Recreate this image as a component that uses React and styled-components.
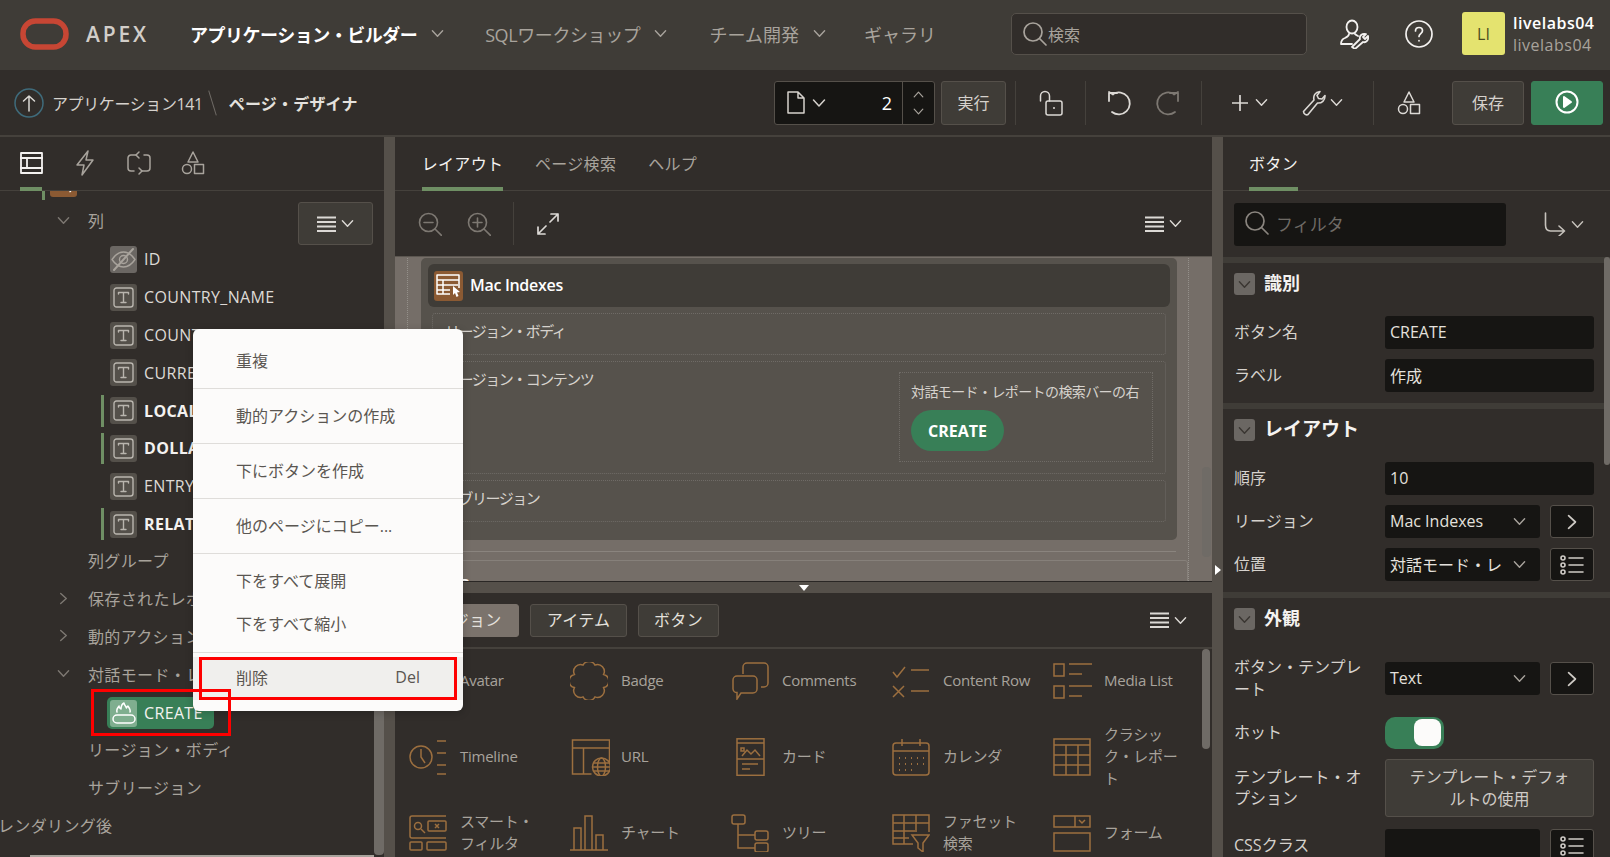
import React from "react";
import styled, { createGlobalStyle } from "styled-components";

const Global = createGlobalStyle`
  html, body { margin: 0; padding: 0; height: 100%; overflow: hidden; background: #312d2a; }
  body { font-family: "Open Sans", "Noto Sans CJK JP", sans-serif; font-size: 16px; color: #d6d2cd; }
  * { box-sizing: border-box; }
`;

const C = {
  bar: "#3f3c37", bg: "#312d2a", split: "#55504a", line: "#45413c", input: "#161513",
  muted: "#a8a39c", text: "#dedad6", white: "#fcfbfa", green: "#387f57", brown: "#9c6f3f", tab: "#6f8f64",
};

const Ic = styled.svg`
  flex: none; display: block; fill: none; stroke: currentColor; stroke-width: ${(p) => p.$sw || 1.5};
  color: ${(p) => p.$c || "inherit"}; stroke-linecap: round; stroke-linejoin: round;
`;

const Chev = ({ c, w = 13, dir = "down", sw = 1.5 }) => (
  <Ic $c={c} $sw={sw} width={w} height={w} viewBox="0 0 14 14">
    {dir === "down" && <path d="M1.5 4l5.5 6 5.5-6" />}
    {dir === "up" && <path d="M1.5 10l5.5-6 5.5 6" />}
    {dir === "right" && <path d="M4 1.5l6 5.5-6 5.5" />}
  </Ic>
);
const SearchI = ({ c, s = 26 }) => (
  <Ic $c={c} $sw={1.7} width={s} height={s} viewBox="0 0 26 26"><circle cx="11" cy="11" r="9" /><path d="M17.5 17.5L24 24" /></Ic>
);
const UserWrench = () => (
  <Ic $c="#f4f2f0" $sw={1.8} width={30} height={30} viewBox="0 0 30 30">
    <ellipse cx="13" cy="8" rx="5.5" ry="6.5" />
    <path d="M10 15c0 2-2 3-4 4-2.500 1-4 3-4 6h11" />
    <path d="M16 15c1 1 2 1.500 3 2" />
    <path d="M13 28l8-8c-1-3 2-6 6-5l-3 3 2 2 3-3c1 4-2 7-5 6l-8 7z" />
  </Ic>
);
const HelpI = () => (
  <Ic $c="#f4f2f0" $sw={1.7} width={28} height={28} viewBox="0 0 28 28">
    <circle cx="14" cy="14" r="13" /><path d="M10.500 11c0-2 1.500-3.500 3.500-3.500s3.500 1.500 3.500 3.300c0 2.700-3.500 3-3.500 5.700" /><path d="M14 20.500v.3" />
  </Ic>
);
const UpCircle = () => (
  <Ic $c="#dcd9d5" width={30} height={30} viewBox="0 0 30 30">
    <circle cx="15" cy="15" r="14" stroke="#3f6b7b" /><path d="M15 23V8M9.500 13L15 8l5.500 5" />
  </Ic>
);
const FileI = () => (
  <Ic $c="#d6d2cd" width={18} height={23} viewBox="0 0 18 23"><path d="M1 1h10l6 6v15H1zM11 1v6h6" /></Ic>
);
const LockI = () => (
  <Ic $c="#dcd9d5" width={24} height={26} viewBox="0 0 24 26">
    <rect x="7" y="11" width="16" height="14" rx="2" /><path d="M1.500 11V6a4.500 4.500 0 019 0v5" /><path d="M15 18v.1" strokeWidth="2" />
  </Ic>
);
const UndoI = ({ c, flip }) => (
  <Ic $c={c} $sw={1.8} width={24} height={26} viewBox="0 0 24 26" style={flip ? { transform: "scaleX(-1)" } : undefined}>
    <path d="M6 4a11 11 0 11-1 18" /><path d="M2 2l4 2.500v-.5M2 11V3h8" />
  </Ic>
);
const PlusI = () => (
  <Ic $c="#dcd9d5" $sw={1.7} width={16} height={16} viewBox="0 0 16 16"><path d="M8 0.500v15M0.500 8h15" /></Ic>
);
const WrenchI = () => (
  <Ic $c="#dcd9d5" $sw={1.6} width={24} height={26} viewBox="0 0 24 26">
    <path d="M1.500 21.500L12 10c-1-4 1-8 6-8.500l-3 4 1.500 3 3.500.500 3-3.500c.3 5-3.500 8-7.500 7.500L6 24.500c-1.500 1-4.500-.5-4.500-3z" />
  </Ic>
);
const ShapesI = ({ c = "#dcd9d5", s = 24 }) => (
  <Ic $c={c} $sw={1.5} width={s} height={s} viewBox="0 0 24 24">
    <path d="M12 1l5 10H7z" /><circle cx="6" cy="18" r="4.500" /><rect x="13.500" y="13.500" width="9" height="9" />
  </Ic>
);
const PlayCircle = () => (
  <Ic $c="#fff" $sw={2} width={24} height={24} viewBox="0 0 24 24"><circle cx="12" cy="12" r="10.500" /><path d="M9 7l7 5-7 5z" fill="#fff" /></Ic>
);
const LayoutI = () => (
  <Ic $c="#f4f2f0" $sw={1.8} width={23} height={24} viewBox="0 0 23 24" style={{ strokeLinecap: "square" }}><rect x="1" y="2" width="21" height="20" /><path d="M1 7h21M1 17h21M7 7v10" /></Ic>
);
const BoltI = () => (
  <Ic $c="#a8a39c" width={20} height={26} viewBox="0 0 20 26"><path d="M13 1L2 15h7l-2 10 11-15h-7z" /></Ic>
);
const LoopI = () => (
  <Ic $c="#a8a39c" width={24} height={26} viewBox="0 0 24 26">
    <path d="M9 5H4a3 3 0 00-3 3v10a3 3 0 003 3h3M15 21h5a3 3 0 003-3V8a3 3 0 00-3-3h-3" />
    <path d="M12 2l-3 3 3 3M12 18l3 3-3 3" />
  </Ic>
);
const MenuI = ({ c = "#dcd9d5" }) => (
  <Ic $c={c} $sw={1.9} width={19} height={16} viewBox="0 0 19 16" style={{ strokeLinecap: "butt" }}><path d="M0 1.500h19M0 6h19M0 10.500h19M0 15h19" /></Ic>
);
const ZoomI = ({ plus }) => (
  <Ic $c="#7d7872" $sw={1.6} width={24} height={24} viewBox="0 0 24 24">
    <circle cx="10.500" cy="10.500" r="9" /><path d="M17 17l6.500 6.500M6 10.500h9" />{plus && <path d="M10.500 6v9" />}
  </Ic>
);
const ExpandI = () => (
  <Ic $c="#dcd9d5" $sw={1.7} width={22} height={22} viewBox="0 0 22 22"><path d="M13 9L21 1M14 1h7v7M9 13l-8 8M1 14v7h7" /></Ic>
);
const TurnI = () => (
  <Ic $c="#c6c2bc" $sw={1.6} width={22} height={24} viewBox="0 0 22 24"><path d="M1.500 1v12c0 4 2 6 5 6h14M15 14l5.500 5-5.500 5" /></Ic>
);
const ListI = () => (
  <Ic $c="#cfcbc6" $sw={1.6} width={24} height={20} viewBox="0 0 24 20">
    <circle cx="3" cy="3" r="2" /><circle cx="3" cy="10" r="2" /><circle cx="3" cy="17" r="2" /><path d="M9 3h14M9 10h14M9 17h14" />
  </Ic>
);
const TIcon = () => (
  <Ic $c="#b9b5ae" $sw={1.4} width={21} height={21} viewBox="0 0 21 21">
    <rect x="1" y="1" width="19" height="19" rx="2.500" /><path d="M5.500 7V5.500h10V7M10.500 5.500v10M8 15.500h5" />
  </Ic>
);
const EyeOff = () => (
  <Ic $c="#a8a39c" $sw={1.4} width={25} height={25} viewBox="0 0 25 25">
    <path d="M1 12.500C5 6.500 9 5 12.500 5s7.500 1.500 11.500 7.500C20 18.500 16 20 12.500 20S5 18.500 1 12.500z" />
    <circle cx="12.500" cy="12.500" r="4" /><path d="M3 23L22 2" strokeWidth="2" />
  </Ic>
);
const FireI = () => (
  <Ic $c="#fff" $sw={1.5} width={24} height={22} viewBox="0 0 24 22">
    <rect x="1" y="13" width="22" height="8" rx="4" />
    <path d="M5 10c-1-3 1-4 2-6 0 2 1 2 2 3 0-3 1-5 3-6 0 2 2 3 2.500 5 .5-1 1-2 1.500-2 1 2 3 4 2 6" />
  </Ic>
);
const ReportI = ({ s = 26, c = "#fff" }) => (
  <Ic $c={c} $sw={1.5} width={s} height={s} viewBox="0 0 26 26" style={{ strokeLinecap: "butt" }}>
    <path d="M14 21H1V2h22v13" /><path d="M1 7h22M1 12h21M1 17h13M7 7v14" /><path d="M17 13l7 6-3 .5 1.500 3.500-2 1-1.500-4-2 2z" fill={c} stroke="none" />
  </Ic>
);

/* palette icons */
const PalSvg = ({ children, w = 38 }) => (
  <Ic $c={C.brown} $sw={1.5} width={w} height={38} viewBox="0 0 38 38" style={{ strokeLinecap: "butt", strokeLinejoin: "miter" }}>{children}</Ic>
);
const lobes = (() => {
  const n = 8, cx = 19, cy = 19, r = 15;
  const pts = Array.from({ length: n }, (_, i) => {
    const a = (i / n) * Math.PI * 2 - Math.PI / 2 + Math.PI / 8;
    return [cx + r * Math.cos(a) * 1.05, cy + r * Math.sin(a) * 1.15];
  });
  return pts.map((p, i) => (i === 0 ? `M${p[0].toFixed(1)} ${p[1].toFixed(1)}` : `A6.800 6.800 0 0 1 ${p[0].toFixed(1)} ${p[1].toFixed(1)}`)).join(" ") + ` A6.800 6.800 0 0 1 ${pts[0][0].toFixed(1)} ${pts[0][1].toFixed(1)}Z`;
})();
const icons = {
  avatar: <PalSvg><circle cx="19" cy="19" r="17" /></PalSvg>,
  badge: <PalSvg><path d={lobes} /></PalSvg>,
  comments: (
    <PalSvg w={40}>
      <path d="M12 12V5a4 4 0 014-4h17a4 4 0 014 4v16a4 4 0 01-4 4h-3" />
      <path d="M6 14h16a4 4 0 014 4v9a4 4 0 01-4 4H10l-4 6v-6.500A4 4 0 012 27v-9a4 4 0 014-4z" />
    </PalSvg>
  ),
  contentRow: (
    <PalSvg>
      <path d="M1 10l4 5 8-10M19 8h18M1 24l11 11M12 24L1 35M19 29h18" />
    </PalSvg>
  ),
  mediaList: (
    <PalSvg w={40}>
      <rect x="1" y="2" width="10" height="12" /><rect x="1" y="24" width="10" height="12" />
      <path d="M16 2h23M16 12h13M16 24h23M16 34h13" />
    </PalSvg>
  ),
  timeline: (
    <PalSvg>
      <circle cx="12" cy="19" r="11" /><path d="M12 11v8l4 6M28 3h9M28 15h9M28 27h9M28 36h9" />
    </PalSvg>
  ),
  url: (
    <PalSvg w={41}>
      <path d="M21 36H2V2h37v22M2 10h37M13 10v26" />
      <circle cx="31" cy="29" r="9" /><ellipse cx="31" cy="29" rx="4" ry="9" /><path d="M22 29h18M23 25h16M23 33h16" />
    </PalSvg>
  ),
  card: (
    <PalSvg>
      <rect x="6" y="0.800" width="27" height="36.500" /><path d="M6 5h27M6 21h27M11 18l5-6 4 4 4-4 5 6M10 13h3v-3h-3zM11 26h16M11 31h8" />
    </PalSvg>
  ),
  calendar: (
    <PalSvg>
      <rect x="1" y="5" width="36" height="32" rx="3" /><path d="M1 13h36M10 1v7M28 1v7" />
      <path d="M7 20h1M13 20h1M19 20h1M25 20h1M31 20h1M7 26h1M13 26h1M19 26h1M25 26h1M31 26h1M7 32h1M13 32h1M19 32h1" strokeWidth="2" />
    </PalSvg>
  ),
  classic: (
    <PalSvg><rect x="1" y="1" width="36" height="36" /><path d="M1 7h36M1 17h36M1 27h36M13 7v30M25 7v30" /></PalSvg>
  ),
  smart: (
    <PalSvg>
      <path d="M37 2H3a2 2 0 00-2 2v18a2 2 0 002 2h34" /><circle cx="9" cy="12" r="3.500" /><path d="M12 15l4 4" />
      <rect x="19" y="7" width="18" height="10" rx="1" /><path d="M26 10l4 4M30 10l-4 4" />
      <rect x="1" y="28" width="12" height="8" rx="1" /><rect x="18" y="28" width="19" height="8" rx="1" />
    </PalSvg>
  ),
  chart: (
    <PalSvg><path d="M0 36h38M4 36V14h7v22M15 36V2h7v34M26 36V21h7v15" /></PalSvg>
  ),
  tree: (
    <PalSvg>
      <rect x="1" y="1" width="13" height="9" rx="2" /><rect x="24" y="17" width="13" height="9" rx="2" /><rect x="24" y="29" width="13" height="9" rx="2" />
      <path d="M7 10v24h17M7 21h17" />
    </PalSvg>
  ),
  facet: (
    <PalSvg>
      <path d="M21 30H1V1h36v17M1 9h36M1 17h22M1 24h16M12 1v29M24 1v17" />
      <path d="M20 21h17l-6 8v9l-5-4v-5z" />
    </PalSvg>
  ),
  form: (
    <PalSvg>
      <rect x="1" y="2" width="36" height="11" /><path d="M22 2v11M26 6l3 3 3-3" /><rect x="1" y="19" width="36" height="18" />
    </PalSvg>
  ),
};

/* ---------- layout ---------- */
const Page = styled.div`
  position: relative; width: 1610px; height: 857px; overflow: hidden;
  display: flex; flex-direction: column; background: ${C.bg};
`;
const Header = styled.header`
  height: 70px; flex: none; display: flex; align-items: center; background: ${C.bar}; padding: 0 13px 3px 20px;
`;
const Logo = styled.svg`flex: none; width: 49px; height: 32px; margin-top: 1px;`;
const Brand = styled.div`
  margin-left: 17px; width: 62px; font-size: 21px; font-weight: 600; letter-spacing: 2.800px; color: #d2cec9; font-family: "Open Sans", sans-serif;
`;
const Nav = styled.nav`display: flex; align-items: center; margin-left: 42px;`;
const NavItem = styled.div`
  display: flex; align-items: center; gap: 14px; white-space: nowrap; font-size: 18px;
  margin-right: ${(p) => p.$mr || 0}px; letter-spacing: ${(p) => p.$ls || 0}px;
  font-weight: ${(p) => (p.$active ? 700 : 400)}; color: ${(p) => (p.$active ? "#fff" : "#a8a39c")};
`;
const SearchBox = styled.div`
  margin-left: auto; width: 296px; height: 42px; display: flex; align-items: center; gap: 0; padding-left: 10px;
  background: ${C.bg}; border: 1px solid #55504a; border-radius: 5px; color: #a8a39c; font-size: 16px;
`;
const UserIconSlot = styled.div`margin-left: 32px;`;
const HelpSlot = styled.div`margin-left: 36px;`;
const Avatar = styled.div`
  margin-left: 29px; width: 43px; height: 43px; border-radius: 3px; background: #e4e36f; color: #4c4b1e;
  display: flex; align-items: center; justify-content: center; font-size: 16px;
`;
const UserNames = styled.div`margin-left: 8px; width: 84px; display: flex; flex-direction: column; line-height: 22px;`;
const UserName = styled.div`
  font-weight: ${(p) => (p.$bold ? 600 : 400)}; color: ${(p) => (p.$bold ? "#fff" : "#a8a39c")}; font-size: 16px; letter-spacing: 0.500px;
`;

const Toolbar = styled.div`
  height: 67px; flex: none; display: flex; align-items: center; padding: 0 7px 0 14px; border-bottom: 2px solid ${C.line}; background: ${C.bg};
`;
const Crumb = styled.div`
  margin-left: ${(p) => p.$ml || 0}px; white-space: nowrap; font-size: 16px; letter-spacing: ${(p) => p.$ls || 0}px;
  font-weight: ${(p) => (p.$bold ? 700 : 400)}; color: ${(p) => (p.$bold ? "#e4e1dd" : "#d6d2cd")};
`;
const CrumbSlash = styled.div`
  margin-left: 9px; width: 1px; height: 26px; background: #6f6b66; transform: rotate(-17deg);
`;
const PageSelect = styled.div`
  margin-left: auto; width: 161px; height: 44px; display: flex; align-items: center; gap: 7px; background: ${C.input};
  border: 1px solid #55504a; border-radius: 3px; padding-left: 12px; color: #d6d2cd;
`;
const PageNum = styled.div`margin-left: auto; font-size: 18px; color: #fff; padding-right: 3px;`;
const Spin = styled.div`
  width: 32px; height: 100%; border-left: 1px solid #55504a; display: flex; flex-direction: column; align-items: center; justify-content: center; gap: 6px;
`;
const ToolBtn = styled.div`
  margin-left: ${(p) => p.$ml || 0}px; width: ${(p) => p.$w}px; height: 44px; display: flex; align-items: center; justify-content: center; padding-bottom: 1px;
  background: ${(p) => (p.$primary ? C.green : C.bar)}; border: 1px solid ${(p) => (p.$primary ? C.green : "#55504a")}; border-radius: 3px;
  font-size: 16px; color: #d6d2cd;
`;
const ToolGroup = styled.div`
  width: ${(p) => p.$w}px; height: 44px; display: flex; align-items: center; justify-content: center; gap: ${(p) => p.$gap || 0}px;
  border-left: 1px solid ${C.line}; margin-left: ${(p) => p.$ml || 0}px;
`;
const WithChev = styled.div`display: flex; align-items: center; gap: ${(p) => p.$gap || 7}px;`;
const SaveSlot = styled.div`margin-left: 9px;`;

const Main = styled.div`flex: 1; min-height: 0; display: grid; grid-template-columns: 384px 11px 817px 11px 387px;`;
const Column = styled.div`position: relative; min-width: 0; display: flex; flex-direction: column; overflow: hidden;`;
const Splitter = styled.div`
  background: ${C.split}; display: flex; align-items: center; justify-content: center; padding-top: ${(p) => p.$pt || 0}px;
`;
const Caret = styled.div`
  width: 0; height: 0; border-top: 5px solid transparent; border-bottom: 5px solid transparent; border-left: 6px solid #fff;
`;
const TabBar = styled.div`
  height: 54px; flex: none; display: flex; align-items: stretch; gap: ${(p) => p.$gap || 32}px; padding-left: ${(p) => p.$pl || 27}px;
  border-bottom: 1px solid ${C.line};
`;
const TabItem = styled.div`
  width: ${(p) => (p.$w ? `${p.$w}px` : "auto")}; display: flex; align-items: center; justify-content: center; height: 54px; white-space: nowrap; font-size: 16px;
  padding-top: 2px; letter-spacing: 0.300px;
  color: ${(p) => (p.$active ? "#f4f2f0" : "#a8a39c")}; border-bottom: 4px solid ${(p) => (p.$active ? C.tab : "transparent")};
`;

const Tree = styled.div`position: relative; flex: 1; overflow: hidden; min-height: 0;`;
const TreeRow = styled.div`
  position: relative; height: 37.800px; display: flex; align-items: center; white-space: nowrap; font-size: 16px; letter-spacing: 0.350px;
  padding-left: ${(p) => p.$pl}px; padding-bottom: ${(p) => (p.$up ? 3 : 0)}px; margin-top: ${(p) => p.$mt || 0}px; margin-left: ${(p) => p.$ml || 0}px;
  color: ${(p) => p.$c || C.muted}; font-weight: ${(p) => (p.$bold ? 700 : 400)};
  &::before {
    content: ""; display: ${(p) => (p.$mod ? "block" : "none")}; position: absolute; left: ${(p) => p.$barL || 101}px;
    top: 3px; bottom: 3px; width: 3px; background: ${C.tab};
  }
`;
const TwistySlot = styled.div`width: 33px; flex: none; display: flex; align-items: center; color: #7d7872; padding-left: 2px;`;
const NodeIcon = styled.div`
  width: 27px; height: 27px; flex: none; margin-right: 7px; border-radius: 3px; display: flex; align-items: center; justify-content: center;
  background: ${(p) => p.$bg || "#54504a"};
`;
const GreenPill = styled.div`
  display: flex; align-items: center; height: 32px; padding: 0 11px 0 3px; background: ${C.green}; border-radius: 5px; color: #f4f2f0;
`;
const TreeMenu = styled.div`
  position: absolute; left: 298px; top: 11px; width: 75px; height: 43px; display: flex; align-items: center; justify-content: center; gap: 5px;
  background: ${C.bar}; border: 1px solid #55504a; border-radius: 3px;
`;
const VScroll = styled.div`
  position: absolute; right: ${(p) => p.$r || 0}px; top: ${(p) => p.$t}px; height: ${(p) => p.$h}px; width: ${(p) => p.$w || 10}px;
  background: #6f6b66; border-radius: 4px;
`;
const HScroll = styled.div`
  position: absolute; left: 30px; right: 10px; bottom: 0; height: 2px; background: #a8a39c;
`;

const CenterTools = styled.div`
  height: 65px; flex: none; display: flex; align-items: center; padding: 0 30px 0 23px;
`;
const ZoomGap = styled.div`width: ${(p) => p.$w}px; flex: none;`;
const VSep = styled.div`width: 1px; height: 43px; background: ${C.line}; flex: none; margin: 0 23px 0 22px;`;
const RightGroup = styled.div`margin-left: auto; display: flex; align-items: center; gap: 5px;`;

const Canvas = styled.div`
  position: relative; height: 325px; flex: none; overflow: hidden; padding: 1px 0 0 12px; background: #756e68; border-top: 1px solid #5b5650;
`;
const Lane = styled.div`
  width: 782px; border-left: 1px dotted #94908a; border-right: 1px dotted #94908a; padding: 0 12px 0 13px; height: 100%;
`;
const RegionCard = styled.div`
  width: 756px; height: 282px; background: #56524c; border-radius: 5px; padding: 6px 7px;
`;
const RegionHead = styled.div`
  height: 43px; display: flex; align-items: center; gap: 7px; padding-left: 6px; background: ${C.bar}; border-radius: 6px;
  font-weight: 600; font-size: 16px; letter-spacing: -0.300px; color: #fff;
`;
const RegionTitle = styled.span`padding-bottom: 1px;`;
const BrownIcon = styled.div`
  width: 29px; height: 30px; background: #8b5a33; border-radius: 3px; display: flex; align-items: center; justify-content: center;
`;
const DropBox = styled.div`
  position: relative; margin: 6px 4px 0; height: ${(p) => p.$h}px; border: 1px dotted #6f6b66; border-radius: 3px; padding: 6px 12px 8px;
  color: #d6d2cd; font-size: 15px; letter-spacing: -1.500px; display: flex; justify-content: space-between;
`;
const InnerBox = styled.div`
  width: 254px; height: 90px; margin-top: 4px; border: 1px dotted #6f6b66; padding: 8px 11px; font-size: 14px; letter-spacing: -0.600px; white-space: nowrap;
`;
const HotButton = styled.div`
  margin-top: 9px; width: 93px; height: 41px; border-radius: 21px; background: ${C.green}; color: #fff; display: flex; align-items: center; justify-content: center;
  font-size: 16px; font-weight: 700; letter-spacing: 0;
`;
const CardGap = styled.div`height: 12px; border-bottom: 1px solid #8a847e;`;
const NextBox = styled.div`
  margin: 8px -12px 0 0; padding: 12px 0 0 38px; height: 60px; border: 1px solid #86807a; border-radius: 3px; font-weight: 700; font-size: 15px; color: #fff;
`;
const DownBar = styled.div`
  height: 12px; flex: none; background: ${C.split}; border-top: 1px solid #2a2725; display: flex; align-items: center; justify-content: center;
`;
const DownCaret = styled.div`
  width: 0; height: 0; border-left: 5px solid transparent; border-right: 5px solid transparent; border-top: 6px solid #fff;
`;
const Palette = styled.div`position: relative; flex: 1; min-height: 0; overflow: hidden;`;
const PalTabs = styled.div`
  height: 56px; display: flex; align-items: center; gap: 11px; padding: 0 25px 0 8px; border-bottom: 2px solid ${C.line};
`;
const PalTab = styled.div`
  width: ${(p) => p.$w}px; height: 33px; display: flex; align-items: center; justify-content: center; border-radius: 3px; font-size: 16px; padding-bottom: 3px; letter-spacing: 0.300px;
  background: ${(p) => (p.$active ? "#7b736c" : C.bar)}; border: 1px solid ${(p) => (p.$active ? "#7b736c" : "#55504a")}; color: #e4e1dd;
`;
const PalGrid = styled.div`
  display: grid; grid-template-columns: repeat(5, 161px); grid-auto-rows: 76px; padding-left: 14px; margin-top: -6px;
`;
const PalCell = styled.div`display: flex; align-items: center; gap: 13px;`;
const PalIcon = styled.div`width: 38px; flex: none; display: flex; justify-content: center;`;
const PalLabel = styled.div`
  width: 84px; font-size: 15px; line-height: 22px; color: #a8a39c; letter-spacing: -0.250px; padding-bottom: 2px;
  white-space: ${(p) => (p.$latin ? "nowrap" : "normal")};
`;

const FilterRow = styled.div`
  height: 66px; flex: none; display: flex; align-items: center; padding: 0 26px 0 11px;
`;
const FilterBox = styled.div`
  width: 272px; height: 43px; display: flex; align-items: center; gap: 6px; padding: 0 0 2px 10px; background: ${C.input}; border-radius: 3px;
  color: #6f6b66; font-size: 17px;
`;
const Sections = styled.div`position: relative; flex: 1; min-height: 0; overflow: hidden;`;
const Section = styled.section`
  border-top: 6px solid ${C.bar}; padding: 10px 16px 11px 11px; display: flex; flex-direction: column; gap: 10px;
`;
const SecHead = styled.div`display: flex; align-items: center; gap: 9px; height: 22px; margin-bottom: 11px;`;
const SecBox = styled.div`
  width: 21px; height: 22px; flex: none; border-radius: 3px; background: #6b6763; display: flex; align-items: center; justify-content: center; color: #312d2a;
`;
const SecTitle = styled.div`font-weight: 700; font-size: ${(p) => p.$fs || 18}px; color: #f4f2f0; line-height: 20px; padding-bottom: 2px;`;
const PropRow = styled.div`
  display: grid; grid-template-columns: 151px 1fr; align-items: center; min-height: ${(p) => p.$min || 33}px; margin-top: ${(p) => p.$mt || 0}px;
`;
const PropLabel = styled.div`font-size: 16px; line-height: 21.500px; color: #d6d2cd; padding: 0 8px 0 0;`;
const PropField = styled.div`display: flex; gap: 10px;`;
const Input = styled.div`
  flex: 1; min-width: 0; height: 33px; padding: 0 5px 1px; display: flex; align-items: center; background: ${C.input}; border-radius: 3px;
  color: #e4e1dd; font-size: 16px; white-space: nowrap; overflow: hidden;
`;
const SelectBox = styled(Input)`justify-content: space-between; padding-right: 14px;`;
const SideBtn = styled.div`
  width: 44px; height: 33px; flex: none; display: flex; align-items: center; justify-content: center; background: ${C.input};
  border: 1px solid #55504a; border-radius: 3px; color: #cfcbc6;
`;
const Toggle = styled.div`
  width: 59px; height: 32px; display: flex; align-items: center; justify-content: flex-end; padding-right: 3px; background: ${C.green}; border-radius: 10px;
`;
const Knob = styled.div`width: 27px; height: 27px; background: ${C.white}; border-radius: 8px;`;
const WideButton = styled.div`
  flex: 1; height: 58px; display: flex; align-items: center; justify-content: center; text-align: center; padding: 0 20px; line-height: 22px;
  background: ${C.bar}; border: 1px solid #55504a; border-radius: 3px; color: #cfcbc6; font-size: 16px;
`;

/* overlays */
const ContextMenu = styled.div`
  position: absolute; left: 193px; top: 329px; width: 270px; height: 382px; padding-top: 5px; background: ${C.white}; border-radius: 6px;
  box-shadow: 0 2px 8px rgba(0, 0, 0, 0.2);
`;
const MenuItem = styled.div`
  height: ${(p) => p.$h || 43}px; padding: 0 43px 3px; display: flex; align-items: center; justify-content: space-between; font-size: 16px; color: #5a5651;
  background: ${(p) => (p.$hl ? "#f0efed" : "transparent")}; margin-top: ${(p) => p.$mt || 0}px;
`;
const MenuSep = styled.div`height: 1px; background: #dfddda; margin-top: ${(p) => p.$mt || 0}px;`;
const RedBox = styled.div`
  position: absolute; left: ${(p) => p.$x}px; top: ${(p) => p.$y}px; width: ${(p) => p.$w}px; height: ${(p) => p.$h}px; border: 3px solid #fe0000; pointer-events: none;
`;

const palette = [
  ["avatar", "Avatar"], ["badge", "Badge"], ["comments", "Comments"], ["contentRow", "Content Row"], ["mediaList", "Media List"],
  ["timeline", "Timeline"], ["url", "URL"], ["card", "カード"], ["calendar", "カレンダ"], ["classic", "クラシック・レポート"],
  ["smart", "スマート・フィルタ"], ["chart", "チャート"], ["tree", "ツリー"], ["facet", "ファセット検索"], ["form", "フォーム"],
];
const columns = [
  ["COUNTRY_NAME", false], ["COUNTRY_ISO", false], ["CURRENCY_NAME", false], ["LOCAL_PRICE", true],
  ["DOLLAR_PRICE", true], ["ENTRY_DATE", false], ["RELATIVE_INDEX", true],
];

export default function App() {
  return (
    <Page>
      <Global />
      <Header>
        <Logo viewBox="0 0 49 32"><rect x="3" y="3" width="43" height="26" rx="12.500" fill="none" stroke="#c74634" strokeWidth="5.500" /></Logo>
        <Brand>APEX</Brand>
        <Nav>
          <NavItem $active $mr={41} $ls={-0.5}>アプリケーション・ビルダー<Chev c="#a8a39c" w={13} /></NavItem>
          <NavItem $mr={42} $ls={-0.4}>SQLワークショップ<Chev c="#a8a39c" w={13} /></NavItem>
          <NavItem $mr={38}>チーム開発<Chev c="#a8a39c" w={13} /></NavItem>
          <NavItem>ギャラリ</NavItem>
        </Nav>
        <SearchBox><SearchI c="#a8a39c" />検索</SearchBox>
        <UserIconSlot><UserWrench /></UserIconSlot>
        <HelpSlot><HelpI /></HelpSlot>
        <Avatar>LI</Avatar>
        <UserNames><UserName $bold>livelabs04</UserName><UserName>livelabs04</UserName></UserNames>
      </Header>

      <Toolbar>
        <UpCircle />
        <Crumb $ml={8} $ls={-0.4}>アプリケーション141</Crumb>
        <CrumbSlash />
        <Crumb $ml={16} $ls={0.2} $bold>ページ・デザイナ</Crumb>
        <PageSelect>
          <FileI /><Chev c="#d6d2cd" w={14} />
          <PageNum>2</PageNum>
          <Spin><Chev c="#a8a39c" dir="up" w={11} /><Chev c="#a8a39c" w={11} /></Spin>
        </PageSelect>
        <ToolBtn $ml={6} $w={65}>実行</ToolBtn>
        <ToolGroup $w={70} $ml={9}><LockI /></ToolGroup>
        <ToolGroup $w={116} $gap={25}><UndoI c="#dcd9d5" /><UndoI c="#7d7872" flip /></ToolGroup>
        <ToolGroup $w={172} $gap={34}>
          <WithChev><PlusI /><Chev c="#dcd9d5" /></WithChev>
          <WithChev $gap={4}><WrenchI /><Chev c="#dcd9d5" /></WithChev>
        </ToolGroup>
        <ToolGroup $w={70}><ShapesI /></ToolGroup>
        <SaveSlot><ToolBtn $w={72}>保存</ToolBtn></SaveSlot>
        <ToolBtn $w={72} $ml={7} $primary><PlayCircle /></ToolBtn>
      </Toolbar>

      <Main>
        <Column>
          <TabBar $pl={20} $gap={32}>
            <TabItem $active $w={22}><LayoutI /></TabItem>
            <TabItem $w={22}><BoltI /></TabItem>
            <TabItem $w={22}><LoopI /></TabItem>
            <TabItem $w={22}><ShapesI c="#a8a39c" /></TabItem>
          </TabBar>
          <Tree>
            <TreeRow $pl={50} $mt={-26} $mod $barL={42}><NodeIcon $bg="#8b5a33"><ReportI s={20} /></NodeIcon></TreeRow>
            <TreeRow $pl={55} $up><TwistySlot><Chev c="#7d7872" /></TwistySlot>列</TreeRow>
            <TreeRow $pl={110} $c={C.text}><NodeIcon $bg="#6b6763"><EyeOff /></NodeIcon>ID</TreeRow>
            {columns.map(([name, mod]) => (
              <TreeRow key={name} $pl={110} $c={mod ? "#f4f2f0" : C.text} $mod={mod} $bold={mod}>
                <NodeIcon><TIcon /></NodeIcon>{name}
              </TreeRow>
            ))}
            <TreeRow $pl={88} $up>列グループ</TreeRow>
            <TreeRow $pl={55} $up><TwistySlot><Chev c="#7d7872" dir="right" /></TwistySlot>保存されたレポート</TreeRow>
            <TreeRow $pl={55} $up><TwistySlot><Chev c="#7d7872" dir="right" /></TwistySlot>動的アクション</TreeRow>
            <TreeRow $pl={55} $up><TwistySlot><Chev c="#7d7872" /></TwistySlot>対話モード・レポートの検索バーの右</TreeRow>
            <TreeRow $pl={107}>
              <GreenPill><NodeIcon $bg="#7fae8f"><FireI /></NodeIcon>CREATE</GreenPill>
            </TreeRow>
            <TreeRow $pl={88} $up>リージョン・ボディ</TreeRow>
            <TreeRow $pl={88} $up>サブリージョン</TreeRow>
            <TreeRow $pl={0} $ml={-2} $up>レンダリング後</TreeRow>
            <TreeMenu><MenuI /><Chev c="#dcd9d5" /></TreeMenu>
            <VScroll $t={450} $h={214} />
            <HScroll />
          </Tree>
        </Column>

        <Splitter />

        <Column>
          <TabBar>
            <TabItem $active $w={81}>レイアウト</TabItem>
            <TabItem>ページ検索</TabItem>
            <TabItem>ヘルプ</TabItem>
          </TabBar>
          <CenterTools>
            <ZoomI /><ZoomGap $w={25} /><ZoomI plus />
            <VSep /><ExpandI />
            <RightGroup><MenuI /><Chev c="#dcd9d5" /></RightGroup>
          </CenterTools>
          <Canvas>
            <Lane>
              <RegionCard>
                <RegionHead><BrownIcon><ReportI /></BrownIcon><RegionTitle>Mac Indexes</RegionTitle></RegionHead>
                <DropBox $h={42}>リージョン・ボディ</DropBox>
                <DropBox $h={113}>
                  リージョン・コンテンツ
                  <InnerBox>対話モード・レポートの検索バーの右<HotButton>CREATE</HotButton></InnerBox>
                </DropBox>
                <DropBox $h={42}>サブリージョン</DropBox>
              </RegionCard>
              <CardGap />
              <NextBox>P</NextBox>
            </Lane>
            <VScroll $r={1} $w={9} $t={210} $h={90} />
          </Canvas>
          <DownBar><DownCaret /></DownBar>
          <Palette>
            <PalTabs>
              <PalTab $active $w={116}>リージョン</PalTab>
              <PalTab $w={97}>アイテム</PalTab>
              <PalTab $w={81}>ボタン</PalTab>
              <RightGroup><MenuI /><Chev c="#dcd9d5" /></RightGroup>
            </PalTabs>
            <PalGrid>
              {palette.map(([k, label]) => (
                <PalCell key={k}><PalIcon>{icons[k]}</PalIcon><PalLabel $latin={/^[A-Za-z ]+$/.test(label)}>{label}</PalLabel></PalCell>
              ))}
            </PalGrid>
            <VScroll $r={2} $w={8} $t={56} $h={100} />
          </Palette>
        </Column>

        <Splitter $pt={146}><Caret /></Splitter>

        <Column>
          <TabBar $pl={26}>
            <TabItem $active $w={49}>ボタン</TabItem>
          </TabBar>
          <FilterRow>
            <FilterBox><SearchI c="#8a857f" />フィルタ</FilterBox>
            <RightGroup><TurnI /><Chev c="#c6c2bc" /></RightGroup>
          </FilterRow>
          <Sections>
            <Section>
              <SecHead><SecBox><Chev c="#3a3632" /></SecBox><SecTitle>識別</SecTitle></SecHead>
              <PropRow><PropLabel>ボタン名</PropLabel><PropField><Input>CREATE</Input></PropField></PropRow>
              <PropRow><PropLabel>ラベル</PropLabel><PropField><Input>作成</Input></PropField></PropRow>
            </Section>
            <Section>
              <SecHead><SecBox><Chev c="#3a3632" /></SecBox><SecTitle $fs={19}>レイアウト</SecTitle></SecHead>
              <PropRow><PropLabel>順序</PropLabel><PropField><Input>10</Input></PropField></PropRow>
              <PropRow>
                <PropLabel>リージョン</PropLabel>
                <PropField><SelectBox>Mac Indexes<Chev c="#a8a39c" /></SelectBox><SideBtn><Chev c="#cfcbc6" dir="right" w={16} /></SideBtn></PropField>
              </PropRow>
              <PropRow>
                <PropLabel>位置</PropLabel>
                <PropField><SelectBox>対話モード・レ<Chev c="#a8a39c" /></SelectBox><SideBtn><ListI /></SideBtn></PropField>
              </PropRow>
            </Section>
            <Section>
              <SecHead><SecBox><Chev c="#3a3632" /></SecBox><SecTitle>外観</SecTitle></SecHead>
              <PropRow $min={55}>
                <PropLabel>ボタン・テンプレート</PropLabel>
                <PropField><SelectBox>Text<Chev c="#a8a39c" /></SelectBox><SideBtn><Chev c="#cfcbc6" dir="right" w={16} /></SideBtn></PropField>
              </PropRow>
              <PropRow $min={33}><PropLabel>ホット</PropLabel><PropField><Toggle><Knob /></Toggle></PropField></PropRow>
              <PropRow $min={58}>
                <PropLabel>テンプレート・オプション</PropLabel>
                <PropField><WideButton>テンプレート・デフォルトの使用</WideButton></PropField>
              </PropRow>
              <PropRow $mt={2}>
                <PropLabel>CSSクラス</PropLabel>
                <PropField><Input /><SideBtn><ListI /></SideBtn></PropField>
              </PropRow>
            </Section>
            <VScroll $r={0} $w={6} $t={0} $h={208} />
          </Sections>
        </Column>
      </Main>

      <ContextMenu>
        <MenuItem $h={54}>重複</MenuItem>
        <MenuSep />
        <MenuItem $h={54}>動的アクションの作成</MenuItem>
        <MenuSep />
        <MenuItem $h={54}>下にボタンを作成</MenuItem>
        <MenuSep />
        <MenuItem $h={54}>他のページにコピー...</MenuItem>
        <MenuSep />
        <MenuItem $mt={6}>下をすべて展開</MenuItem>
        <MenuItem>下をすべて縮小</MenuItem>
        <MenuSep $mt={6} />
        <MenuItem $mt={4} $hl>削除<span>Del</span></MenuItem>
      </ContextMenu>
      <RedBox $x={91} $y={689} $w={140} $h={47} />
      <RedBox $x={199} $y={657} $w={258} $h={43} />
    </Page>
  );
}
